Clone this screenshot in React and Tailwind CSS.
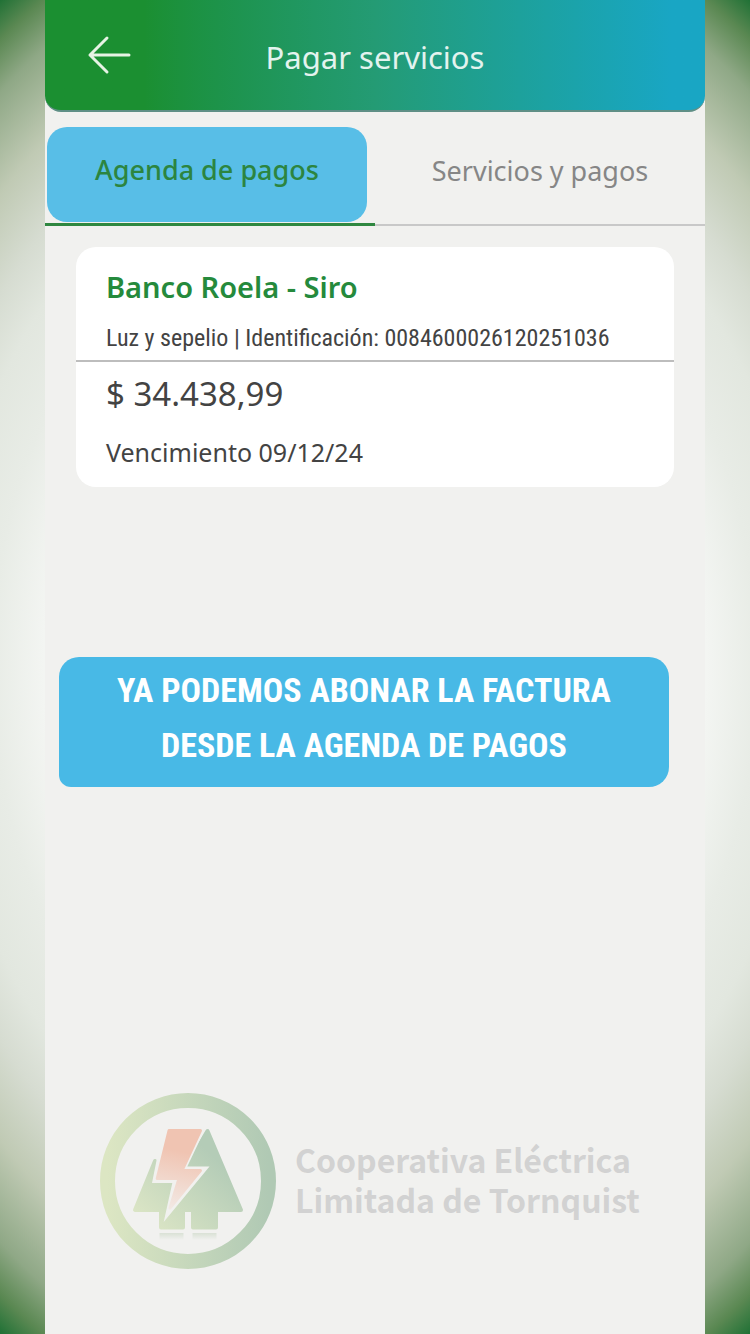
import React from 'react';

const HeaderBar = () => (
  <header className="flex items-center h-28 rounded-b-2xl border-b-2 border-[#5f8f86] bg-linear-to-r from-[#1b8f31] from-15% via-[#249b74] via-50% to-[#19a6c4] to-95% px-10">
    <button type="button" aria-label="Volver" className="flex-1">
      <svg className="h-12 w-12" viewBox="0 0 48 48" fill="none" stroke="#e6f3e4" strokeWidth={3} strokeLinecap="round" strokeLinejoin="round">
        <path d="M22 7L5 24l17 17M5 24h39" />
      </svg>
    </button>
    <h1 className="pt-1 text-[31px] text-[#e3f3ee]">Pagar servicios</h1>
    <div className="flex-1"></div>
  </header>
);

const Tabs = () => (
  <nav className="flex mt-[15px] border-b-2 border-[#c8c8c8]">
    <div className="w-1/2 -mb-[2px] px-[2px] pb-[1px] border-b-3 border-[#2f8740]">
      <button type="button" className="h-[95px] w-full max-w-80 rounded-[20px] bg-[#58bee7] pb-2 text-[27px] text-[#2c8540] font-medium">
        Agenda de pagos
      </button>
    </div>
    <button type="button" className="w-1/2 pb-2 text-[27px] text-[#868686]">Servicios y pagos</button>
  </nav>
);

const PaymentCard = ({ payment }) => (
  <article className="mx-[31px] mt-[21px] rounded-[20px] bg-white text-[#434343]">
    <div className="px-[30px] pt-5 pb-[2px] border-b-2 border-[#bdbdbd]">
      <h2 className="text-[29px] leading-10 font-semibold text-[#258a3c]">{payment.name}</h2>
      <p className="mt-[11px] text-2xl leading-10 whitespace-nowrap font-['Roboto_Condensed','Roboto',sans-serif]">{payment.detail}</p>
    </div>
    <div className="px-[30px] pt-2 pb-[15px]">
      <p className="text-[33px] leading-12">{payment.amount}</p>
      <p className="mt-3.5 text-[25px] leading-10">{payment.due}</p>
    </div>
  </article>
);

const TreeLogo = () => (
  <svg className="h-[178px] w-[178px] shrink-0" viewBox="0 0 178 178" aria-hidden="true">
    <defs>
      <linearGradient id="ring" x1="0" x2="1" y1="0" y2="0">
        <stop offset="0" stopColor="#dce6c3" />
        <stop offset="1" stopColor="#b0c9b4" />
      </linearGradient>
      <linearGradient id="trees" x1="45" y1="130" x2="110" y2="60" gradientUnits="userSpaceOnUse">
        <stop offset="0" stopColor="#dbe5c5" />
        <stop offset="1" stopColor="#b4ccb7" />
      </linearGradient>
      <linearGradient id="bolt" x1="85" x2="72" y1="60" y2="120" gradientUnits="userSpaceOnUse">
        <stop offset="0" stopColor="#f0c4b2" />
        <stop offset="1" stopColor="#f2ebe7" />
      </linearGradient>
      <linearGradient id="shade" x1="0" x2="0" y1="0" y2="1">
        <stop offset="0" stopColor="#d9e1d5" />
        <stop offset="1" stopColor="#f1f1ef" />
      </linearGradient>
    </defs>
    <circle cx="89" cy="89" r="80.5" fill="none" stroke="url(#ring)" strokeWidth="15" />
    <path
      d="M56 69L36 118H62V135.500H84V118H94V135.500H117V118H142L108.500 39L84 80L62 90Z"
      fill="url(#trees)" stroke="url(#trees)" strokeWidth="4" strokeLinejoin="round"
    />
    {/* gap between the bolt and the trees */}
    <path d="M66 34H107.500L88.300 74.500H110.500L64.700 130L73.300 91H53L58 66Z" fill="#f1f1ef" />
    <path d="M86 120H92V140H86Z" fill="#f1f1ef" />
    <path
      d="M70 38.500H101.500L83 78.500H101.500L71 116L80 86.500H58.200Z"
      fill="url(#bolt)" stroke="url(#bolt)" strokeWidth="3" strokeLinejoin="round"
    />
    <path d="M60.500 141H84.500V148H60.500ZM93.500 141H117.500V148H93.500Z" fill="url(#shade)" />
  </svg>
);

const App = () => {
  const payment = {
    name: 'Banco Roela - Siro',
    detail: 'Luz y sepelio | Identificación: 0084600026120251036',
    amount: '$ 34.438,99',
    due: 'Vencimiento 09/12/24'
  };

  return (
    <div className="min-h-screen flex px-[6%] font-['Noto_Sans',sans-serif] bg-[radial-gradient(85%_62%_at_center,#ffffff_0%,#f3f5f2_52%,#e8ece6_60%,#e2e7df_68%,#d6dcd1_74%,#c0cab4_82%,#8fa886_91%,#5a8852_96%,#1d7034_100%)]">
      <div className="flex flex-1 min-w-0 flex-col bg-[#f1f1ef]">
        <HeaderBar />
        <Tabs />
        <PaymentCard payment={payment} />

        {/* Highlighted step message */}
        <div className="mt-[170px] ml-[14px] mr-9 rounded-[20px] rounded-bl-xl bg-[#48b9e6] pt-1.5 pb-3.5 text-center text-[34px] leading-[55px] font-bold text-white font-['Roboto_Condensed','Roboto',sans-serif]">
          <p>YA PODEMOS ABONAR LA FACTURA</p>
          <p>DESDE LA AGENDA DE PAGOS</p>
        </div>

        <footer className="mt-auto flex items-center gap-[18px] pb-16 pl-[54px]">
          <TreeLogo />
          <div className="pb-1 text-[32px] leading-10 font-bold whitespace-nowrap text-[#d2d2d2] font-['Noto_Sans_CJK_SC',sans-serif]">
            <p>Cooperativa Eléctrica</p>
            <p>Limitada de Tornquist</p>
          </div>
        </footer>
      </div>
    </div>
  );
};

export default App;
